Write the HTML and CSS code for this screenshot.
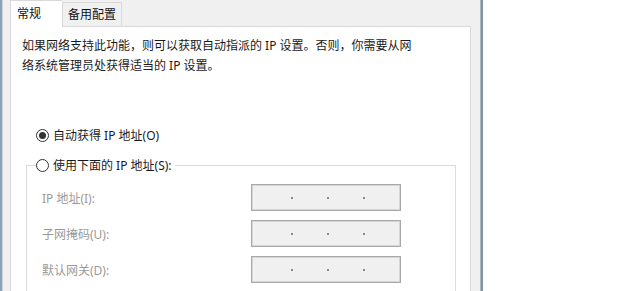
FILE: index.html
```html
<!DOCTYPE html>
<html lang="zh-CN">
  <head>
    <meta charset="UTF-8" />
    <title>Internet 协议版本 4 (TCP/IPv4) 属性</title>
    <link rel="stylesheet" href="styles.css">
  </head>
  <body>
    <div class="screen">
      <div class="edge-left"></div>
      <div class="dialog">
        <ul class="tabs">
          <li class="tab active">常规</li>
          <li class="tab">备用配置</li>
        </ul>
        <div class="panel">
          <p class="intro">如果网络支持此功能，则可以获取自动指派的 IP 设置。否则，你需要从网<br />络系统管理员处获得适当的 IP 设置。</p>
          <label class="radio-row auto">
            <span class="radio checked"></span>
            <span>自动获得 IP 地址(O)</span>
          </label>
          <fieldset class="group">
            <legend>
              <label class="radio-row">
                <span class="radio"></span>
                <span>使用下面的 IP 地址(S):</span>
              </label>
            </legend>
            <div class="fields">
              <span class="field-label">IP 地址(I):</span>
              <div class="ip-box"><i></i><i></i><i></i></div>
              <span class="field-label">子网掩码(U):</span>
              <div class="ip-box"><i></i><i></i><i></i></div>
              <span class="field-label">默认网关(D):</span>
              <div class="ip-box"><i></i><i></i><i></i></div>
            </div>
          </fieldset>
        </div>
      </div>
      <div class="edge-right"></div>
      <div class="desktop"></div>
    </div>
  </body>
</html>
```

FILE: styles.css
```css
* {
  margin: 0;
  padding: 0;
  list-style: none;
  box-sizing: border-box;
}
body {
  width: 620px;
  height: 291px;
  overflow: hidden;
  background-color: #fff;
  font-family: "Noto Sans", "Noto Sans CJK SC", sans-serif;
  font-size: 12px;
  color: #1a1a1a;
}

.screen {
  display: flex;
  height: 291px;
}
.edge-left {
  width: 3px;
  background-color: #8ea2b4;
  border-right: 1px solid #c9d3dc;
}
.dialog {
  width: 477px;
  background-color: #f0f0f0;
  padding: 0 9px 0 7px;
  display: flex;
  flex-direction: column;
}
.edge-right {
  width: 3px;
  background-color: #7f95a3;
  border-left: 1px solid #a9b9c3;
}
.desktop {
  flex: 1;
  background-color: #fff;
}

/* tabs */
.tabs {
  display: flex;
  align-items: flex-end;
  height: 30px;
  border-bottom: 1px solid #d9d9d9;
}
.tab {
  height: 24px;
  padding: 0 5px;
  line-height: 23px;
  background-color: #f0f0f0;
  border: 1px solid #d9d9d9;
  border-bottom: none;
  color: #111;
}
.tab.active {
  height: 27px;
  width: 52px;
  margin-bottom: -1px;
  padding-left: 6px;
  line-height: 25px;
  background-color: #fff;
  border-right: none;
}

.panel {
  flex: 1;
  background-color: #fff;
  border: 1px solid #d9d9d9;
  border-top: none;
  padding: 9px 14px 0 11px;
}
.intro {
  line-height: 20px;
}

/* radios */
.radio-row {
  display: flex;
  align-items: center;
  gap: 4px;
  height: 20px;
}
.radio-row.auto {
  margin: 49px 0 0 14px;
}
.radio {
  width: 13px;
  height: 13px;
  border: 1px solid #333;
  border-radius: 50%;
  display: flex;
  align-items: center;
  justify-content: center;
}
.radio.checked::after {
  content: "";
  width: 7px;
  height: 7px;
  border-radius: 50%;
  background-color: #333;
}

/* group box */
.group {
  margin: 10px 0 0 4px;
  width: 430px;
  border: 1px solid #dcdcdc;
  padding: 0 0 0 9px;
}
.group legend {
  padding: 0 3px 0 0;
}
.fields {
  display: grid;
  grid-template-columns: 209px 150px;
  row-gap: 9px;
  align-items: center;
  padding: 9px 0 20px 6px;
}
.field-label {
  color: #9a9a9a;
}
.ip-box {
  height: 27px;
  background-color: #f0f0f0;
  border: 1px solid #a8a8a8;
  box-shadow: inset 0 0 0 1px #d6d6d6;
  display: flex;
  align-items: center;
  gap: 34px;
  padding-left: 39px;
}
.ip-box i {
  width: 2px;
  height: 2px;
  background-color: #8a8a8a;
}
```
